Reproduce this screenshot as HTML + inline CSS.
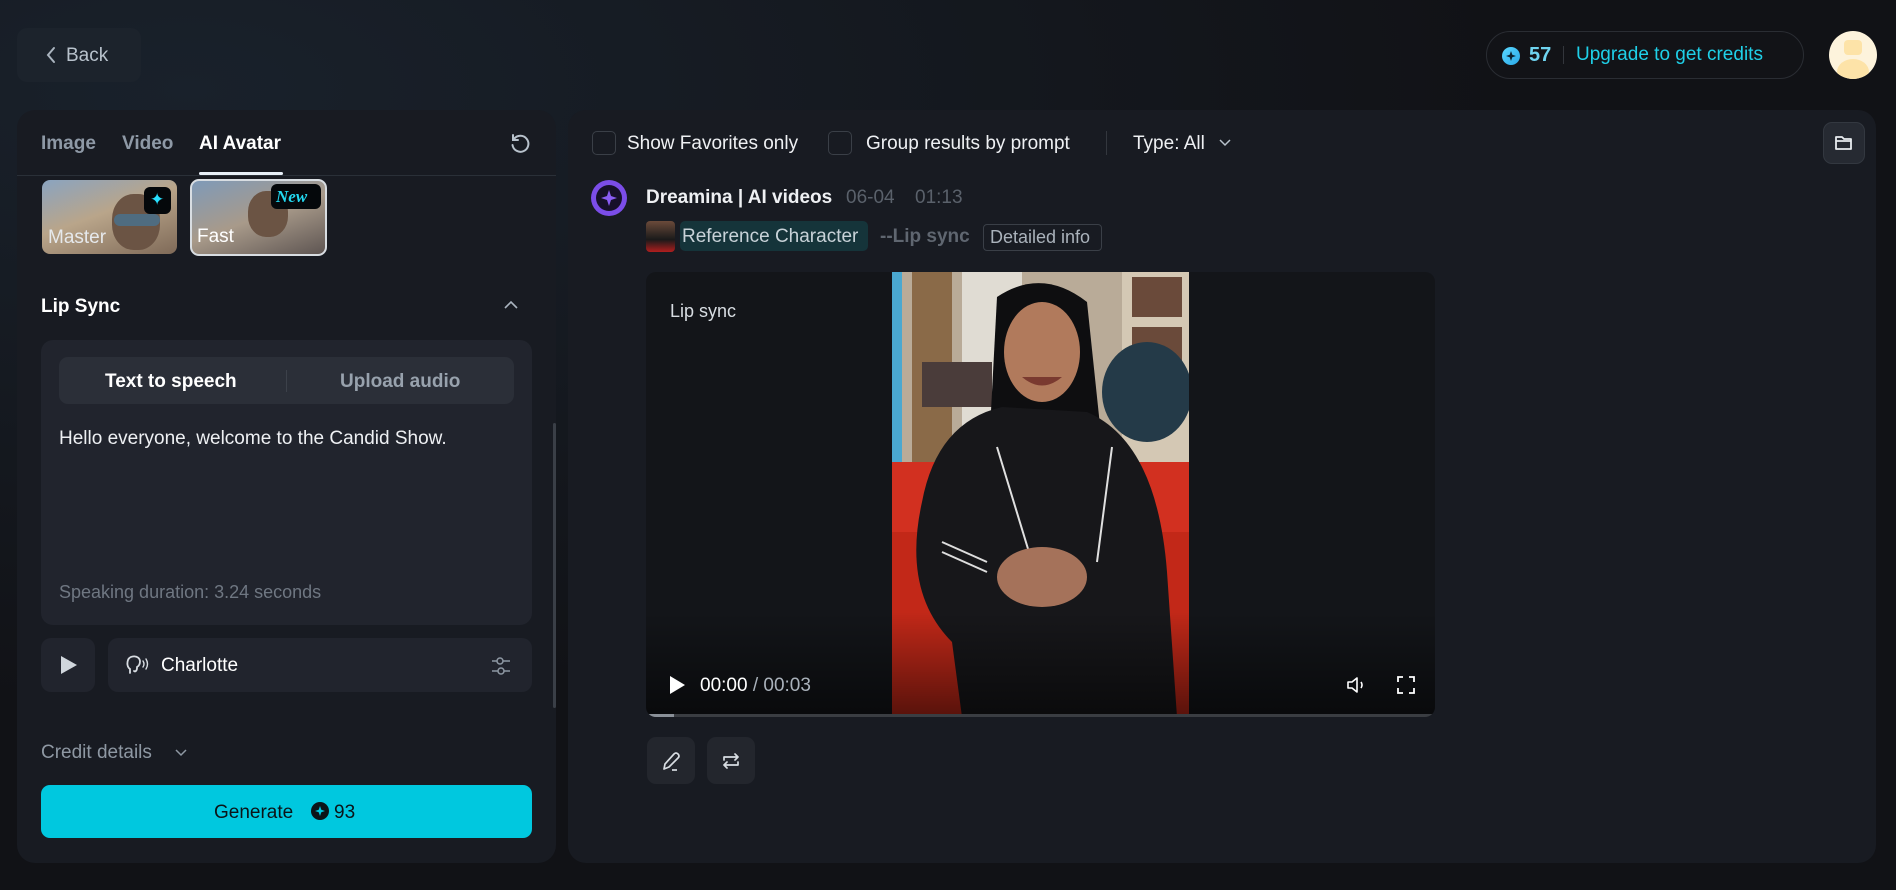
<!DOCTYPE html>
<html><head><meta charset="utf-8"><style>
*{box-sizing:border-box;margin:0;padding:0}
body{width:1896px;height:890px;background:#111216;font-family:"Liberation Sans",sans-serif;position:relative;overflow:hidden;color:#fff}
.a{position:absolute}
.t{position:absolute;white-space:nowrap;line-height:1}
</style></head><body>
<div class="a" style="left:0;top:0;width:1896px;height:890px;background:radial-gradient(ellipse at 10% 10%,#19212b 0,#111216 55%)"></div>
<!-- Back -->
<div class="a" style="left:17px;top:28px;width:124px;height:54px;border-radius:10px;background:#1c232c"></div>
<svg class="a" style="left:44px;top:46px" width="14" height="18" viewBox="0 0 14 18"><path d="M10 2L4 9l6 7" stroke="#aab4bf" stroke-width="2" fill="none" stroke-linecap="round"/></svg>
<div class="t" style="left:66px;top:46px;font-size:19px;color:#b8c2cc">Back</div>
<!-- credits -->
<div class="a" style="left:1486px;top:31px;width:318px;height:48px;border-radius:24px;border:1px solid #2a2d33;background:#121317"></div>
<div class="a" style="left:1502px;top:47px;width:18px;height:18px;border-radius:50%;background:linear-gradient(135deg,#5ad8ff,#2aa8e8)"></div>
<svg class="a" style="left:1505px;top:50px" width="12" height="12" viewBox="0 0 12 12"><path d="M6 1L7.3 4.7 11 6 7.3 7.3 6 11 4.7 7.3 1 6 4.7 4.7Z" fill="#0e2230"/></svg>
<div class="t" style="left:1529px;top:45px;font-size:20px;color:#6fd4f0;font-weight:bold">57</div>
<div class="a" style="left:1563px;top:46px;width:1px;height:18px;background:#33363c"></div>
<div class="t" style="left:1576px;top:45px;font-size:19px;color:#1fd0e8">Upgrade to get credits</div>
<div class="a" style="left:1829px;top:31px;width:48px;height:48px;border-radius:50%;background:#fdf3dc;overflow:hidden"><div class="a" style="left:8px;top:28px;width:32px;height:26px;border-radius:50%;background:#fde3a8"></div><div class="a" style="left:15px;top:9px;width:18px;height:15px;border-radius:4px;background:#fde3a8"></div></div>
<!-- Left panel -->
<div class="a" style="left:17px;top:110px;width:539px;height:753px;border-radius:18px;background:#181b22"></div>
<div class="t" style="left:41px;top:134px;font-size:19px;color:#8e99a6;font-weight:bold">Image</div>
<div class="t" style="left:122px;top:134px;font-size:19px;color:#8e99a6;font-weight:bold">Video</div>
<div class="t" style="left:199px;top:134px;font-size:19px;color:#fff;font-weight:bold">AI Avatar</div>
<div class="a" style="left:199px;top:172px;width:84px;height:3px;background:#e8f0f8;border-radius:2px"></div>
<div class="a" style="left:17px;top:175px;width:539px;height:1px;background:#2a3038"></div>
<svg class="a" style="left:509px;top:133px" width="22" height="22" viewBox="0 0 22 22"><path d="M5 6A8 8 0 1 1 3.5 12" stroke="#b8c2cc" stroke-width="2" fill="none" stroke-linecap="round"/><path d="M4 2v5h5" stroke="#b8c2cc" stroke-width="2" fill="none" stroke-linecap="round"/></svg>
<!-- thumbs -->
<div class="a" style="left:42px;top:180px;width:135px;height:74px;border-radius:8px;background:linear-gradient(160deg,#8aa4c0 0,#b9a58a 45%,#7f6a58 100%);overflow:hidden"><div class="a" style="left:70px;top:14px;width:48px;height:56px;border-radius:45%;background:#6b5444"></div><div class="a" style="left:72px;top:34px;width:46px;height:12px;border-radius:6px;background:#4f6c80"></div></div>
<div class="a" style="left:144px;top:187px;width:27px;height:27px;border-radius:6px;background:#05080b"></div>
<div class="t" style="left:150px;top:191px;font-size:17px;color:#28e0ff">✦</div>
<div class="t" style="left:48px;top:228px;font-size:19px;color:#e6e9ec">Master</div>
<div class="a" style="left:190px;top:179px;width:137px;height:77px;border-radius:9px;border:2px solid #d8dde2;background:linear-gradient(160deg,#7f9ab8 0,#a89a8a 50%,#5e5552 100%);overflow:hidden"><div class="a" style="left:56px;top:10px;width:40px;height:46px;border-radius:45%;background:#6b5444"></div></div>
<div class="a" style="left:271px;top:184px;width:50px;height:25px;border-radius:6px;background:#05080b"></div>
<div class="t" style="left:276px;top:188px;font-size:17px;color:#22d8f0;font-style:italic;font-weight:bold;font-family:'Liberation Serif',serif">New</div>
<div class="t" style="left:197px;top:227px;font-size:19px;color:#fff">Fast</div>
<div class="t" style="left:41px;top:297px;font-size:19px;font-weight:bold;color:#fff">Lip Sync</div>
<svg class="a" style="left:503px;top:299px" width="16" height="12"><path d="M2 9l6-6 6 6" stroke="#aab4bf" stroke-width="1.6" fill="none"/></svg>
<!-- card -->
<div class="a" style="left:41px;top:340px;width:491px;height:285px;border-radius:12px;background:#21242d"></div>
<div class="a" style="left:59px;top:357px;width:455px;height:47px;border-radius:9px;background:#2b2f38"></div>
<div class="a" style="left:286px;top:370px;width:1px;height:22px;background:#3c414a"></div>
<div class="t" style="left:105px;top:372px;font-size:19px;font-weight:bold;color:#fff">Text to speech</div>
<div class="t" style="left:340px;top:372px;font-size:19px;font-weight:bold;color:#98a2ad">Upload audio</div>
<div class="t" style="left:59px;top:429px;font-size:19px;color:#eef0f3">Hello everyone, welcome to the Candid Show.</div>
<div class="t" style="left:59px;top:583px;font-size:18px;color:#6f7782">Speaking duration: 3.24 seconds</div>
<div class="a" style="left:41px;top:638px;width:54px;height:54px;border-radius:10px;background:#21242d"></div>
<svg class="a" style="left:60px;top:655px" width="18" height="20"><path d="M1 1L17 10 1 19Z" fill="#d0d6dc"/></svg>
<div class="a" style="left:108px;top:638px;width:424px;height:54px;border-radius:10px;background:#21242d"></div>
<svg class="a" style="left:125px;top:654px" width="26" height="24" viewBox="0 0 26 24"><path d="M5 19v-4C2 13 2 9 3 6c2-5 11-5 12 1 0 3-1 5-3 6v1c0 3-2 4-3 3" stroke="#d8dde2" stroke-width="1.8" fill="none" stroke-linecap="round"/><path d="M18 7q2 3 0 6M21 5q3 5 0 10" stroke="#d8dde2" stroke-width="1.4" fill="none" stroke-linecap="round"/></svg>
<div class="t" style="left:161px;top:656px;font-size:19px;color:#fff">Charlotte</div>
<svg class="a" style="left:490px;top:655px" width="22" height="22" viewBox="0 0 22 22"><path d="M2 6h18M2 16h18" stroke="#8e98a3" stroke-width="1.5"/><circle cx="10" cy="6" r="3" fill="#21242d" stroke="#8e98a3" stroke-width="1.5"/><circle cx="11" cy="16" r="3" fill="#21242d" stroke="#8e98a3" stroke-width="1.5"/></svg>
<div class="a" style="left:553px;top:423px;width:3px;height:285px;background:#3a3f47;border-radius:2px"></div>
<div class="t" style="left:41px;top:743px;font-size:19px;color:#8e98a3">Credit details</div>
<svg class="a" style="left:174px;top:748px" width="14" height="10"><path d="M2 2l5 5 5-5" stroke="#8e98a3" stroke-width="1.5" fill="none"/></svg>
<div class="a" style="left:41px;top:785px;width:491px;height:53px;border-radius:9px;background:#00c8df"></div>
<div class="t" style="left:214px;top:803px;font-size:19px;color:#0b1418">Generate</div>
<div class="a" style="left:311px;top:802px;width:18px;height:18px;border-radius:50%;background:#0b1418"></div>
<svg class="a" style="left:314px;top:805px" width="12" height="12" viewBox="0 0 12 12"><path d="M6 1L7.3 4.7 11 6 7.3 7.3 6 11 4.7 7.3 1 6 4.7 4.7Z" fill="#00c8df"/></svg>
<div class="t" style="left:334px;top:803px;font-size:19px;color:#0b1418">93</div>
<!-- right panel -->
<div class="a" style="left:568px;top:110px;width:1308px;height:753px;border-radius:18px;background:#181b22"></div>
<div class="a" style="left:592px;top:131px;width:24px;height:24px;border-radius:5px;border:1.5px solid #3a3f47"></div>
<div class="t" style="left:627px;top:134px;font-size:19px;color:#eef0f3">Show Favorites only</div>
<div class="a" style="left:828px;top:131px;width:24px;height:24px;border-radius:5px;border:1.5px solid #3a3f47"></div>
<div class="t" style="left:866px;top:134px;font-size:19px;color:#eef0f3">Group results by prompt</div>
<div class="a" style="left:1106px;top:131px;width:1px;height:24px;background:#33373e"></div>
<div class="t" style="left:1133px;top:134px;font-size:19px;color:#eef0f3">Type: All</div>
<svg class="a" style="left:1218px;top:138px" width="14" height="10"><path d="M2 2l5 5 5-5" stroke="#b8c2cc" stroke-width="1.5" fill="none"/></svg>
<div class="a" style="left:1823px;top:122px;width:42px;height:42px;border-radius:9px;background:#262a32;border:1px solid #333840"></div>
<svg class="a" style="left:1834px;top:134px" width="20" height="18" viewBox="0 0 20 18"><path d="M2 3h6l2 2h7v10H2Z M2 7h15" stroke="#e8ecef" stroke-width="1.8" fill="none" stroke-linejoin="round"/></svg>
<div class="a" style="left:591px;top:180px;width:36px;height:36px;border-radius:50%;background:#7b4de8"></div>
<div class="a" style="left:596px;top:185px;width:26px;height:26px;border-radius:50%;background:#16102a"></div>
<svg class="a" style="left:600px;top:189px" width="18" height="18" viewBox="0 0 18 18"><path d="M9 1L11 7 17 9 11 11 9 17 7 11 1 9 7 7Z" fill="#8a5cf5"/></svg>
<div class="t" style="left:646px;top:188px;font-size:19px;font-weight:bold;color:#eef0f3">Dreamina | AI videos</div>
<div class="t" style="left:846px;top:188px;font-size:19px;color:#5a616b">06-04</div>
<div class="t" style="left:915px;top:188px;font-size:19px;color:#5a616b">01:13</div>
<div class="a" style="left:646px;top:221px;width:29px;height:31px;border-radius:4px;background:linear-gradient(180deg,#6b4a3a,#1a1a1a 60%,#b01e1e)"></div>
<div class="a" style="left:680px;top:221px;width:188px;height:30px;border-radius:5px;background:#15343a"></div>
<div class="t" style="left:682px;top:227px;font-size:19px;color:#c8d2d8">Reference Character</div>
<div class="t" style="left:880px;top:227px;font-size:19px;color:#5f6670;font-weight:bold">--Lip sync</div>
<div class="a" style="left:983px;top:224px;width:119px;height:27px;border-radius:4px;border:1px solid #3a3f47"></div>
<div class="t" style="left:990px;top:228px;font-size:18px;color:#aab2bb">Detailed info</div>
<!-- video -->
<div class="a" style="left:646px;top:272px;width:789px;height:445px;border-radius:10px;background:#131519;overflow:hidden">
<svg class="a" style="left:246px;top:0" width="297" height="445" viewBox="0 0 297 445">
<rect width="297" height="445" fill="#b9ab98"/>
<rect x="0" width="10" height="300" fill="#4aa8d0"/>
<rect x="20" width="40" height="200" fill="#8a6a48"/>
<rect x="70" width="60" height="160" fill="#e0dcd3"/>
<rect x="230" width="67" height="190" fill="#d4c8b4"/>
<rect x="240" y="5" width="50" height="40" fill="#6a4a3a"/>
<rect x="240" y="55" width="50" height="40" fill="#6a4a3a"/>
<rect x="30" y="90" width="70" height="45" fill="#4a3c3a"/>
<ellipse cx="255" cy="120" rx="45" ry="50" fill="#243a48"/>
<rect x="0" y="190" width="297" height="255" fill="#d23020"/>
<rect x="0" y="260" width="297" height="185" fill="#c22818"/>
<path d="M105 25 Q150 -5 195 30 L215 220 L150 240 L95 215Z" fill="#0e0e10"/>
<ellipse cx="150" cy="80" rx="38" ry="50" fill="#b17a5c"/>
<path d="M130 105 Q150 122 170 105" fill="#7a3a30"/>
<path d="M30 230 Q45 150 110 135 L195 140 Q265 170 275 300 L285 445 L70 445 L60 370 Q10 320 30 230Z" fill="#17171a"/>
<path d="M105 175 L140 290 M220 175 L205 290" stroke="#e0e0e0" stroke-width="2"/>
<path d="M50 270 L95 290 M50 280 L95 300" stroke="#ddd" stroke-width="2"/>
<ellipse cx="150" cy="305" rx="45" ry="30" fill="#a5725a"/>
</svg>
<div class="a" style="left:0;top:340px;width:789px;height:105px;background:linear-gradient(180deg,rgba(0,0,0,0),rgba(0,0,0,.55))"></div>
<div class="t" style="left:24px;top:30px;font-size:18px;color:#d8dde2">Lip sync</div>
<svg class="a" style="left:22px;top:403px" width="18" height="20"><path d="M2 1L17 10 2 19Z" fill="#fff"/></svg>
<div class="t" style="left:54px;top:404px;font-size:19px;color:#fff">00:00 <span style="color:#aab2bb">/ 00:03</span></div>
<svg class="a" style="left:700px;top:403px" width="22" height="20" viewBox="0 0 22 20"><path d="M2 7h4l5-4v14l-5-4H2Z" stroke="#fff" stroke-width="1.6" fill="none" stroke-linejoin="round"/><path d="M15 7q2 3 0 6" stroke="#fff" stroke-width="1.6" fill="none"/></svg>
<svg class="a" style="left:750px;top:403px" width="20" height="20" viewBox="0 0 20 20"><path d="M2 7V2h5M13 2h5v5M18 13v5h-5M7 18H2v-5" stroke="#fff" stroke-width="1.8" fill="none"/></svg>
<div class="a" style="left:0;top:442px;width:789px;height:3px;background:#3a3d42"></div>
<div class="a" style="left:0;top:442px;width:28px;height:3px;background:#8a9098"></div>
</div>
<div class="a" style="left:647px;top:737px;width:48px;height:47px;border-radius:9px;background:#23262d"></div>
<svg class="a" style="left:661px;top:750px" width="20" height="22" viewBox="0 0 20 22"><path d="M3 19L4 14 13 4q2-2 4 0t0 4L8 17Z" stroke="#d8dde2" stroke-width="1.7" fill="none" stroke-linejoin="round"/><path d="M11 20h5" stroke="#d8dde2" stroke-width="1.7"/></svg>
<div class="a" style="left:707px;top:737px;width:48px;height:47px;border-radius:9px;background:#23262d"></div>
<svg class="a" style="left:720px;top:750px" width="22" height="22" viewBox="0 0 22 22"><path d="M4 10V7h14M15 4l3 3-3 3M18 12v3H4M7 18l-3-3 3-3" stroke="#d8dde2" stroke-width="1.7" fill="none" stroke-linecap="round" stroke-linejoin="round"/></svg>
</body></html>
